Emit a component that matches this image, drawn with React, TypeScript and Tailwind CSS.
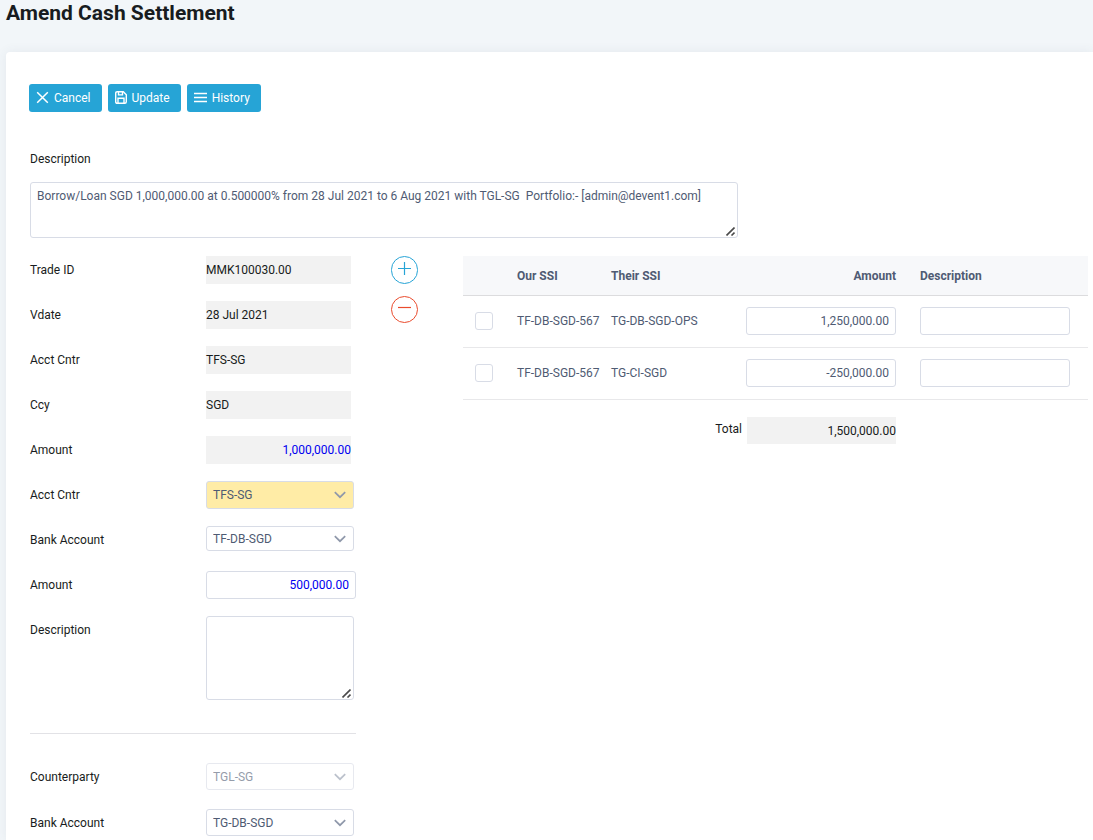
import { useState } from "react";
import type { ReactNode } from "react";

interface SsiRow {
  ourSsi: string;
  theirSsi: string;
  amount: string;
  description: string;
}

const initialRows: SsiRow[] = [
  { ourSsi: "TF-DB-SGD-567", theirSsi: "TG-DB-SGD-OPS", amount: "1,250,000.00", description: "" },
  { ourSsi: "TF-DB-SGD-567", theirSsi: "TG-CI-SGD", amount: "-250,000.00", description: "" },
];

const tradeDetails = [
  { label: "Trade ID", value: "MMK100030.00" },
  { label: "Vdate", value: "28 Jul 2021" },
  { label: "Acct Cntr", value: "TFS-SG" },
  { label: "Ccy", value: "SGD" },
];

function CloseIcon() {
  return (
    <svg width="13" height="13" viewBox="0 0 13 13" fill="none" stroke="currentColor" strokeWidth="1.5" aria-hidden="true">
      <path d="M1.2 1.2l10.6 10.6M11.8 1.2L1.2 11.8" />
    </svg>
  );
}

function SaveIcon() {
  return (
    <svg width="12" height="13" viewBox="0 0 12 13" fill="none" stroke="currentColor" strokeWidth="1.4" aria-hidden="true">
      <path d="M0.700 2.200Q0.700 0.700 2.200 0.700H8.300l3 3v7.100q0 1.500-1.500 1.500H2.200q-1.500 0-1.500-1.500z" />
      <path d="M3 12V7.200h6V12M3.500 0.900v3h4v-3" />
    </svg>
  );
}

function MenuIcon() {
  return (
    <svg width="13" height="13" viewBox="0 0 13 13" fill="none" stroke="currentColor" strokeWidth="1.5" aria-hidden="true">
      <path d="M0 2.500h13M0 6.500h13M0 10.500h13" />
    </svg>
  );
}

function ToolbarButton({ icon, children }: { icon: ReactNode; children: ReactNode }) {
  return (
    <button
      type="button"
      className="flex h-7 items-center gap-[5px] rounded-[3px] bg-[#26a4d6] pr-[11px] pl-[7px] text-white"
    >
      <span className="pb-0.5">{icon}</span>
      {children}
    </button>
  );
}

function FormRow({ id, label, children }: { id: string; label: string; children: ReactNode }) {
  return (
    <div className="flex min-h-7 items-start">
      <label htmlFor={id} className="w-44 shrink-0 leading-7">
        {label}
      </label>
      {children}
    </div>
  );
}

interface TextAreaProps {
  id: string;
  value?: string;
  className: string;
}

// Textarea with a heavier resize grip than the browser's own
function TextArea({ id, value, className }: TextAreaProps) {
  return (
    <div className="relative w-fit max-w-full">
      <textarea
        id={id}
        defaultValue={value}
        className={`block max-w-full resize rounded-[3px] border border-[#d8dce6] px-1.5 py-[5px] leading-4 text-[#4f5b73] [&::-webkit-resizer]:bg-transparent ${className}`}
      />
      <svg
        className="pointer-events-none absolute right-[3px] bottom-0.5"
        width="9"
        height="9"
        viewBox="0 0 9 9"
        fill="none"
        stroke="#4a4a4a"
        strokeWidth="1.6"
        aria-hidden="true"
      >
        <path d="M0.500 8.500l8-8M5.500 8.500l3-3" />
      </svg>
    </div>
  );
}

interface SelectBoxProps {
  id: string;
  value: string;
  className: string;
  disabled?: boolean;
}

function SelectBox({ id, value, className, disabled }: SelectBoxProps) {
  return (
    <div className={`relative w-[148px] ${disabled ? "opacity-60" : ""}`}>
      <select
        id={id}
        defaultValue={value}
        disabled={disabled}
        className={`block w-full appearance-none rounded-[3px] border border-[#d8dce6] px-1.5 text-[#4f5b73] ${className}`}
      >
        <option>{value}</option>
      </select>
      <svg
        className="pointer-events-none absolute inset-y-0 right-2 my-auto"
        width="12"
        height="8"
        viewBox="0 0 12 8"
        fill="none"
        stroke="#8f98aa"
        strokeWidth="1.7"
        aria-hidden="true"
      >
        <path d="M0.800 1.200l5.200 5 5.200-5" />
      </svg>
    </div>
  );
}

export default function App() {
  const [rows, setRows] = useState<SsiRow[]>(initialRows);

  const updateRow = (index: number, patch: Partial<SsiRow>) => {
    setRows(rows.map((row, i) => (i === index ? { ...row, ...patch } : row)));
  };

  const addRow = () => {
    setRows([...rows, { ourSsi: "", theirSsi: "", amount: "", description: "" }]);
  };

  return (
    <div className="min-h-screen bg-[#f2f6f9] pl-1.5 font-[Roboto,sans-serif] text-xs text-[#181c20]">
      <h1 className="h-[52px] text-[21px] leading-[26px] font-bold">Amend Cash Settlement</h1>

      <main className="rounded-tl bg-white pt-8 pr-[5px] pb-1 pl-6 shadow-[0_0_12px_rgba(60,80,100,0.08)]">
        <div className="-ml-px flex gap-1.5">
          <ToolbarButton icon={<CloseIcon />}>Cancel</ToolbarButton>
          <ToolbarButton icon={<SaveIcon />}>Update</ToolbarButton>
          <ToolbarButton icon={<MenuIcon />}>History</ToolbarButton>
        </div>

        <label htmlFor="summary" className="mt-[39px] mb-[15px] block leading-4">
          Description
        </label>
        <TextArea
          id="summary"
          className="h-14 w-[708px]"
          value="Borrow/Loan SGD 1,000,000.00 at 0.500000% from 28 Jul 2021 to 6 Aug 2021 with TGL-SG  Portfolio:- [admin@devent1.com]"
        />

        <div className="mt-[18px] flex items-start">
          <form className="w-[326px] shrink-0">
            <div className="flex flex-col gap-[17px]">
              {tradeDetails.map((item, i) => (
                <FormRow key={item.label} id={`trade-${i}`} label={item.label}>
                  <output id={`trade-${i}`} className="h-7 w-[145px] bg-[#f2f2f2] leading-7">
                    {item.value}
                  </output>
                </FormRow>
              ))}
              <FormRow id="trade-amount" label="Amount">
                <output id="trade-amount" className="h-7 w-[145px] bg-[#f2f2f2] text-right leading-7 text-[#0000f0]">
                  1,000,000.00
                </output>
              </FormRow>
              <FormRow id="acct-cntr" label="Acct Cntr">
                <SelectBox id="acct-cntr" value="TFS-SG" className="h-7 bg-[#ffeca6]" />
              </FormRow>
              <FormRow id="our-bank" label="Bank Account">
                <SelectBox id="our-bank" value="TF-DB-SGD" className="h-[25px] bg-white" />
              </FormRow>
              <FormRow id="our-amount" label="Amount">
                <input
                  id="our-amount"
                  type="text"
                  defaultValue="500,000.00"
                  className="h-7 w-[150px] rounded-[3px] border border-[#d8dce6] px-1.5 text-right text-[#0000f0]"
                />
              </FormRow>
              <FormRow id="our-description" label="Description">
                <TextArea id="our-description" className="h-[84px] w-[148px]" />
              </FormRow>
            </div>

            <hr className="mt-[33px] mb-[29px] border-[#e2e2e6]" />

            <div className="flex flex-col gap-[18px]">
              <FormRow id="counterparty" label="Counterparty">
                <SelectBox id="counterparty" value="TGL-SG" className="h-[27px] bg-white" disabled />
              </FormRow>
              <FormRow id="their-bank" label="Bank Account">
                <SelectBox id="their-bank" value="TG-DB-SGD" className="h-[27px] bg-white" />
              </FormRow>
            </div>
          </form>

          <div className="ml-[35px] flex shrink-0 flex-col gap-3">
            <button
              type="button"
              aria-label="Add row"
              onClick={addRow}
              className="flex h-7 w-[27px] items-start justify-center rounded-full border border-[#26a4d6] pt-[5px] text-[#26a4d6]"
            >
              <svg width="13" height="13" viewBox="0 0 13 13" fill="none" stroke="currentColor" strokeWidth="1.2" aria-hidden="true">
                <path d="M0 6.500h13M6.500 0v13" />
              </svg>
            </button>
            <button
              type="button"
              aria-label="Remove row"
              onClick={() => setRows(rows.slice(0, -1))}
              className="flex h-[27px] w-[27px] items-start justify-center rounded-full border border-[#ea4b2d] pt-1 text-[#ea4b2d]"
            >
              <svg width="13" height="13" viewBox="0 0 13 13" fill="none" stroke="currentColor" strokeWidth="1.2" aria-hidden="true">
                <path d="M0 6.500h13" />
              </svg>
            </button>
          </div>

          <div className="ml-[45px] min-w-0 flex-1">
            <table className="w-full table-fixed border-separate border-spacing-0 text-[#4f5b73]">
              <colgroup>
                <col className="w-[42px]" />
                <col className="w-[94px]" />
                <col className="w-[135px]" />
                <col className="w-[174px]" />
                <col />
              </colgroup>
              <thead>
                <tr className="h-10 bg-[#f7f8fa]">
                  <th className="border-b border-[#dcdcde]" aria-label="Selected" />
                  <th className="border-b border-[#dcdcde] px-3 text-left font-bold">Our SSI</th>
                  <th className="border-b border-[#dcdcde] px-3 text-left font-bold">Their SSI</th>
                  <th className="border-b border-[#dcdcde] px-3 text-right font-bold">Amount</th>
                  <th className="border-b border-[#dcdcde] px-3 text-left font-bold">Description</th>
                </tr>
              </thead>
              <tbody>
                {rows.map((row, i) => (
                  <tr key={i} className="h-[52px]">
                    <td className="border-b border-[#e8e8ea] pb-px pl-3">
                      <input
                        type="checkbox"
                        aria-label={`Select row ${i + 1}`}
                        className="block h-[18px] w-[18px] appearance-none rounded-[3px] border border-[#d8dce6] bg-white checked:bg-[#26a4d6]"
                      />
                    </td>
                    <td className="border-b border-[#e8e8ea] pb-px pl-3 whitespace-nowrap">{row.ourSsi}</td>
                    <td className="border-b border-[#e8e8ea] px-3 pb-px whitespace-nowrap">{row.theirSsi}</td>
                    <td className="border-b border-[#e8e8ea] px-3 pb-px">
                      <input
                        type="text"
                        aria-label={`Amount ${i + 1}`}
                        value={row.amount}
                        onChange={(e) => updateRow(i, { amount: e.target.value })}
                        className="block h-7 w-[150px] rounded-[3px] border border-[#d8dce6] px-1.5 text-right"
                      />
                    </td>
                    <td className="border-b border-[#e8e8ea] px-3 pb-px">
                      <input
                        type="text"
                        aria-label={`Description ${i + 1}`}
                        value={row.description}
                        onChange={(e) => updateRow(i, { description: e.target.value })}
                        className="block h-7 w-[150px] rounded-[3px] border border-[#d8dce6] px-1.5"
                      />
                    </td>
                  </tr>
                ))}
              </tbody>
            </table>

            <div className="mt-[17px] flex w-[433px] justify-end gap-[5px]">
              <label htmlFor="total" className="leading-6">
                Total
              </label>
              <output id="total" className="h-[27px] w-[149px] bg-[#f2f2f2] text-right leading-7">
                1,500,000.00
              </output>
            </div>
          </div>
        </div>
      </main>
    </div>
  );
}
